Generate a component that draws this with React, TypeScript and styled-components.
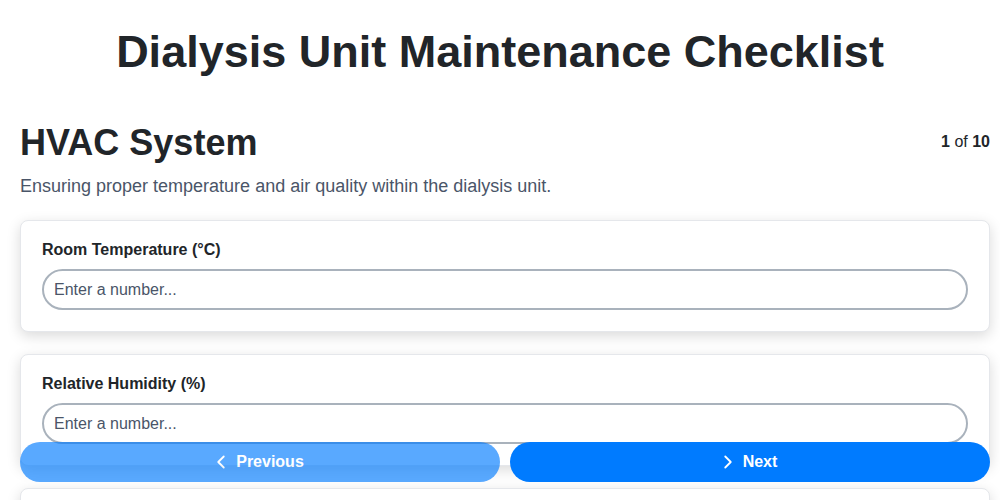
import React from "react";
import styled, { createGlobalStyle } from "styled-components";
import { ChevronLeft, ChevronRight } from "lucide-react";

const GlobalStyle = createGlobalStyle`
  html, body {
    margin: 0;
    padding: 0;
    background: #ffffff;
    font-family: "Liberation Sans", Arial, sans-serif;
    color: #212529;
  }
  * { box-sizing: border-box; }
`;

const Page = styled.div`
  padding: 0 0 120px;
`;

const Title = styled.h1`
  margin: 26px 0 0;
  font-size: 45px;
  line-height: 52px;
  font-weight: 700;
  text-align: center;
  color: #212529;
`;

const Section = styled.section`
  padding: 0 10px 0 20px;
`;

const SectionHeader = styled.div`
  display: flex;
  align-items: center;
  justify-content: space-between;
  margin-top: 44px;
`;

const SectionTitle = styled.h2`
  margin: 0;
  font-size: 36px;
  line-height: 41px;
  font-weight: 700;
  color: #212529;
`;

const Counter = styled.div`
  font-size: 16px;
  color: #212529;
  margin-top: -2px;
  b { font-weight: 700; }
`;

const Description = styled.p`
  margin: 13px 0 0;
  font-size: 18px;
  line-height: 21px;
  color: #4a5568;
`;

const Fields = styled.div`
  display: flex;
  flex-direction: column;
  gap: 22px;
  margin-top: 23px;
`;

const Card = styled.div`
  background: #ffffff;
  border: 1px solid #e5e7eb;
  border-radius: 8px;
  padding: 20px 21px 21px;
  box-shadow: 0 4px 14px rgba(0, 0, 0, 0.15);
`;

const Label = styled.label`
  display: block;
  font-size: 16px;
  line-height: 18px;
  font-weight: 700;
  color: #212529;
  margin-bottom: 10px;
`;

const Input = styled.input`
  display: block;
  width: 100%;
  height: 41px;
  border: 2px solid #a9b2bc;
  border-radius: 21px;
  padding: 0 10px;
  font-family: "Liberation Sans", Arial, sans-serif;
  font-size: 16px;
  color: #212529;
  background: #ffffff;
  outline: none;
  &::placeholder {
    color: #4a5568;
  }
`;

const Nav = styled.div`
  position: fixed;
  left: 20px;
  right: 10px;
  bottom: 18px;
  display: flex;
  gap: 10px;
`;

const NavButton = styled.button<{ $disabled?: boolean }>`
  flex: 1;
  height: 40px;
  border: none;
  border-radius: 20px;
  background: #007bff;
  opacity: ${(p) => (p.$disabled ? 0.65 : 1)};
  color: #ffffff;
  font-family: "Liberation Sans", Arial, sans-serif;
  font-size: 16px;
  font-weight: 700;
  display: flex;
  align-items: center;
  justify-content: center;
  gap: 4px;
  cursor: pointer;
  padding: 0 6px 0 0;
`;

const fields = [
  "Room Temperature (°C)",
  "Relative Humidity (%)",
  "Air Changes per Hour",
];

export default function App() {
  return (
    <>
      <GlobalStyle />
      <Page>
        <Title>Dialysis Unit Maintenance Checklist</Title>
        <Section>
          <SectionHeader>
            <SectionTitle>HVAC System</SectionTitle>
            <Counter>
              <b>1</b> of <b>10</b>
            </Counter>
          </SectionHeader>
          <Description>
            Ensuring proper temperature and air quality within the dialysis unit.
          </Description>
          <Fields>
            {fields.map((f) => (
              <Card key={f}>
                <Label>{f}</Label>
                <Input type="text" placeholder="Enter a number..." />
              </Card>
            ))}
          </Fields>
        </Section>
      </Page>
      <Nav>
        <NavButton $disabled>
          <ChevronLeft size={22} strokeWidth={2} />
          Previous
        </NavButton>
        <NavButton>
          <ChevronRight size={22} strokeWidth={2} />
          Next
        </NavButton>
      </Nav>
    </>
  );
}
